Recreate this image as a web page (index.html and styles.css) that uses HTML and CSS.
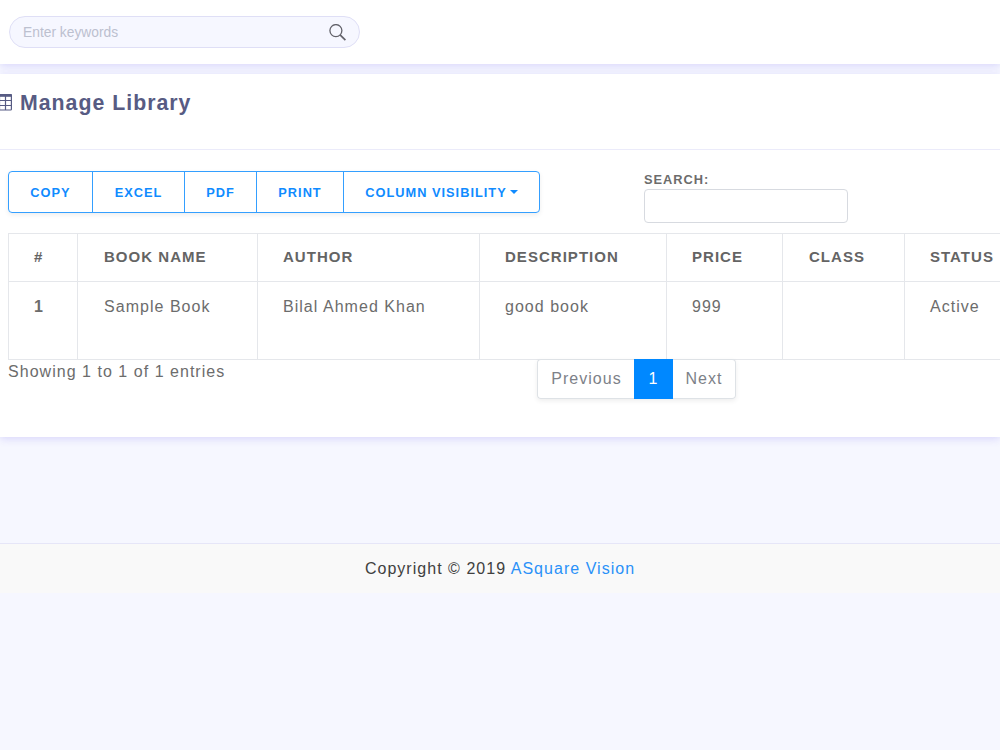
FILE: index.html
```html
<!DOCTYPE html>
<html lang="en">
<head>
<meta charset="utf-8">
<title>Manage Library</title>
<link rel="stylesheet" href="styles.css">
</head>
<body>
<header class="header">
  <form class="keywords">
    <input class="keywords-input" type="text" placeholder="Enter keywords">
    <svg class="keywords-icon" width="17" height="17" viewBox="0 0 17 17" fill="none" stroke="#62626a" stroke-width="1.3"><circle cx="6.9" cy="6.6" r="6"/><path d="M11.1 10.9L16.4 16.2" stroke-width="1.7"/></svg>
  </form>
</header>
<main class="panel">
  <div class="panel-head">
    <svg class="table-icon" width="16" height="17" viewBox="0 0 16 17" fill="none" stroke="#575b83" stroke-width="1.2"><rect x=".6" y=".6" width="14.8" height="15.4" rx=".8"/><path d="M0 1.6H16" stroke-width="2.4"/><path d="M1 6.5H15M1 11.5H15M3.5 2V16M9.5 2V16"/></svg>
    <h1 class="title">Manage Library</h1>
  </div>
  <div class="panel-body">
    <div class="tools">
      <div class="buttons">
        <button class="btn copy">Copy</button><button class="btn excel">Excel</button><button class="btn pdf">PDF</button><button class="btn print">Print</button><button class="btn visibility">Column visibility<span class="caret"></span></button>
      </div>
      <label class="search"><span class="search-label">Search:</span><input class="search-input" type="search"></label>
    </div>
    <table class="books">
      <colgroup><col class="c-num"><col class="c-name"><col class="c-author"><col class="c-desc"><col class="c-price"><col class="c-class"><col class="c-status"></colgroup>
      <thead><tr><th>#</th><th>Book Name</th><th>Author</th><th>Description</th><th>Price</th><th>Class</th><th>Status</th></tr></thead>
      <tbody><tr><th>1</th><td>Sample Book</td><td>Bilal Ahmed Khan</td><td>good book</td><td>999</td><td></td><td>Active</td></tr></tbody>
    </table>
    <div class="table-foot">
      <div class="info">Showing 1 to 1 of 1 entries</div>
      <nav class="pager"><a class="page prev">Previous</a><a class="page active">1</a><a class="page next">Next</a></nav>
    </div>
  </div>
</main>
<footer class="footer">Copyright © 2019 <a class="footer-link">ASquare Vision</a></footer>
</body>
</html>
```
FILE: styles.css
```css
* { box-sizing: border-box; }
body {
  margin: 0;
  background: #f6f7ff;
  color: #6c6c6c;
  font: 16px/24px "Liberation Sans", Arial, sans-serif;
  letter-spacing: 1.03px;
  overflow: hidden;
}
.header {
  height: 64px;
  padding: 16px 9px;
  background: #fff;
  box-shadow: 0 2px 8px rgba(75, 60, 230, .17);
}
.keywords {
  display: flex;
  align-items: center;
  width: 351px;
  height: 32px;
  padding: 0 13px;
  border: 1px solid #dfdff6;
  border-radius: 16px;
  background: #f6f7ff;
}
.keywords-input {
  flex: 1;
  min-width: 0;
  padding: 1px 0 0;
  border: 0;
  outline: 0;
  background: transparent;
  font: 13.8px "Liberation Sans", Arial, sans-serif;
}
.keywords-input::placeholder { color: #bcc0cf; }
.keywords-icon { flex: none; margin-top: 1px; }
.panel {
  position: relative;
  height: 363px;
  margin-top: 10px;
  overflow: hidden;
  background: #fff;
  box-shadow: 0 2px 8px rgba(75, 60, 230, .17);
}
.panel-head {
  display: flex;
  gap: 8px;
  height: 76px;
  margin-left: -4px;
  padding-top: 15px;
  border-bottom: 1px solid #ebebfa;
}
.table-icon { flex: none; margin-top: 5px; }
.title {
  margin: 0;
  color: #575b83;
  font-size: 21.3px;
  line-height: 28px;
  letter-spacing: 1px;
}
.panel-body { padding: 21px 0 0 8px; }
.tools { display: flex; justify-content: space-between; height: 62px; padding-right: 152px; }
.buttons {
  display: flex;
  width: 532px;
  height: 42px;
  border: 1px solid #349fff;
  border-radius: 4px;
  box-shadow: 0 2px 5px rgba(0, 0, 0, .07);
}
.btn {
  padding: 0;
  border: 0;
  border-right: 1px solid #349fff;
  background: none;
  color: #108bff;
  font: bold 12.8px "Liberation Sans", Arial, sans-serif;
  letter-spacing: 1px;
  text-transform: uppercase;
}
.copy { width: 84px; }
.excel { width: 92px; }
.pdf { width: 72px; }
.print { width: 87px; }
.visibility { flex: 1; border-right: 0; }
.caret {
  display: inline-block;
  margin-left: 3px;
  border: 4px solid transparent;
  border-top-color: #108bff;
  border-bottom: 0;
  vertical-align: 3px;
}
.search { width: 204px; }
.search-label {
  display: block;
  height: 18px;
  font-size: 12.8px;
  font-weight: bold;
  line-height: 18px;
  letter-spacing: 1px;
  text-transform: uppercase;
}
.search-input {
  display: block;
  width: 204px;
  height: 34px;
  border: 1px solid #d7dae0;
  border-radius: 4px;
  background: #fff;
}
.books {
  width: 1048px;
  table-layout: fixed;
  border-collapse: collapse;
}
.books th, .books td {
  padding: 13px 0 0 25px;
  border: 1px solid #e5e7eb;
  text-align: left;
  vertical-align: top;
  white-space: nowrap;
}
.books thead th {
  height: 48px;
  padding-top: 11px;
  color: #646464;
  font-size: 15px;
  text-transform: uppercase;
}
.books th:nth-child(2), .books td:nth-child(2),
.books th:nth-child(6) { padding-left: 26px; }
.books tbody tr { height: 78px; }
.c-num { width: 69px; }
.c-name { width: 180px; }
.c-author { width: 222px; }
.c-desc { width: 187px; }
.c-price { width: 116px; }
.c-class { width: 122px; }
.table-foot { display: flex; }
.info { width: 529px; }
.pager {
  position: relative;
  display: flex;
  height: 40px;
  margin-top: -1px;
  border-radius: 4px;
  box-shadow: 0 2px 5px rgba(0, 0, 0, .07);
}
.page {
  border: 1px solid #dee2e6;
  background: #fff;
  color: #7d8188;
  line-height: 38px;
  text-align: center;
}
.prev { width: 97px; padding-left: 1px; border-radius: 4px 0 0 4px; border-right: 0; }
.active { width: 39px; border-color: #0088ff; background: #0088ff; color: #fff; }
.next { width: 63px; border-radius: 0 4px 4px 0; border-left: 0; }
.footer {
  height: 50px;
  margin-top: 106px;
  padding-top: 13px;
  border-top: 1px solid #e6e6f8;
  background: #f9f9f9;
  color: #404040;
  text-align: center;
}
.footer-link { color: #2a91f8; }
```
